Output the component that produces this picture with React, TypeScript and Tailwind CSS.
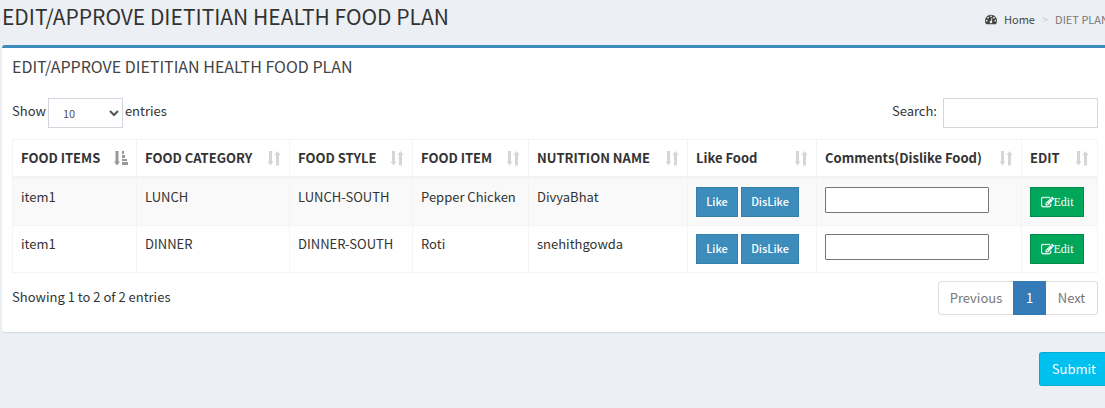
import React from "react";

type SortState = "both" | "asc";

type Column = { label: string; width: string; sort: SortState };

const columns: Column[] = [
  { label: "FOOD ITEMS", width: "w-[124px]", sort: "asc" },
  { label: "FOOD CATEGORY", width: "w-[153px]", sort: "both" },
  { label: "FOOD STYLE", width: "w-[123px]", sort: "both" },
  { label: "FOOD ITEM", width: "w-[116px]", sort: "both" },
  { label: "NUTRITION NAME", width: "w-[159px]", sort: "both" },
  { label: "Like Food", width: "w-[129px]", sort: "both" },
  { label: "Comments(Dislike Food)", width: "w-[205px]", sort: "both" },
  { label: "EDIT", width: "w-[76px]", sort: "both" },
];

const rows = [
  ["item1", "LUNCH", "LUNCH-SOUTH", "Pepper Chicken", "DivyaBhat"],
  ["item1", "DINNER", "DINNER-SOUTH", "Roti", "snehithgowda"],
];

function DashboardIcon() {
  return (
    <svg viewBox="0 0 1792 1792" fill="currentColor" className="size-3" aria-hidden="true">
      <path d="M384 1152q0-53-37.5-90.5t-90.5-37.5-90.5 37.5-37.5 90.5 37.5 90.5 90.5 37.5 90.5-37.5 37.5-90.5zm192-448q0-53-37.5-90.5t-90.5-37.5-90.5 37.5-37.5 90.5 37.5 90.5 90.5 37.5 90.5-37.5 37.5-90.5zm428 481l101-382q6-26-7.5-48.5t-38.5-29.5-48 6.5-30 39.5l-101 382q-60 5-107 43.5t-63 98.5q-20 77 20 146t117 89 146-20 89-117q16-60-6-117t-72-91zm660-33q0-53-37.5-90.5t-90.5-37.5-90.5 37.5-37.5 90.5 37.5 90.5 90.5 37.5 90.5-37.5 37.5-90.5zm-640-640q0-53-37.5-90.5t-90.5-37.5-90.5 37.5-37.5 90.5 37.5 90.5 90.5 37.5 90.5-37.5 37.5-90.5zm448 192q0-53-37.5-90.5t-90.5-37.5-90.5 37.5-37.5 90.5 37.5 90.5 90.5 37.5 90.5-37.5 37.5-90.5zm320 448q0 261-141 483-19 29-54 29h-1402q-35 0-54-29-141-221-141-483 0-182 71-348t191-286 286-191 348-71 348 71 286 191 191 286 71 348z" />
    </svg>
  );
}

function EditIcon() {
  return (
    <svg viewBox="0 0 1792 1792" fill="currentColor" stroke="currentColor" strokeWidth="40" className="size-[13px]" aria-hidden="true">
      <path d="M888 1184l116-116-152-152-116 116v56h96v96h56zm440-720q-16-16-33 1l-350 350q-17 17-1 33t33-1l350-350q17-17 1-33zm80 594v190q0 119-84.5 203.5t-203.5 84.5h-832q-119 0-203.5-84.5t-84.5-203.5v-832q0-119 84.5-203.5t203.5-84.5h832q63 0 117 25 15 7 18 23 3 17-9 29l-49 49q-14 14-32 8-23-6-45-6h-832q-66 0-113 47t-47 113v832q0 66 47 113t113 47h832q66 0 113-47t47-113v-126q0-13 9-22l64-64q15-15 35-7t20 29zm-96-738l288 288-672 672h-288v-288zm444 132l-92 92-288-288 92-92q28-28 68-28t68 28l152 152q28 28 28 68t-28 68z" />
    </svg>
  );
}

function SortIcon({ state }: { state: SortState }) {
  if (state === "asc") {
    return (
      <svg viewBox="0 0 14 15" fill="#999999" className="h-[15px] w-3.5 shrink-0" aria-hidden="true">
        <path d="M1.500 0h3v10.500h1.500L3 14.500L0 10.500h1.500z" />
        <path d="M8 0h2v3H8zM8 4h3v3H8zM8 8h5v2H8zM8 11h6v3H8z" />
      </svg>
    );
  }
  return (
    <svg viewBox="0 0 14 15" fill="#d6d6d6" className="h-[15px] w-3.5 shrink-0" aria-hidden="true">
      <path d="M2 0h3v10.500h1.500L3.500 14.500L0.500 10.500H2z" />
      <path d="M9 14.500h3V4h1.500L10.500 0L7.500 4H9z" />
    </svg>
  );
}

export default function App() {
  return (
    <div className="min-h-screen overflow-x-hidden bg-[#ecf0f5] pl-0.5 font-['Noto_Sans_CJK_SC',sans-serif] text-[13px] leading-5 text-[#333333]">
      <header className="flex h-[45px] items-start justify-between">
        <h1 className="pt-[3px] text-[21px] leading-[26px]">EDIT/APPROVE DIETITIAN HEALTH FOOD PLAN</h1>
        <nav aria-label="Breadcrumb" className="-mr-1 flex items-center pt-[9px] text-[11px] whitespace-nowrap">
          <a href="#" className="flex items-center gap-[7px] text-[#444444]">
            <DashboardIcon />
            Home
          </a>
          <span className="px-[7px] text-[#cccccc]">&gt;</span>
          <span className="text-[#777777]">DIET PLAN</span>
        </nav>
      </header>

      <main>
        <section className="rounded-l-[3px] border-t-3 border-[#3c8dbc] bg-white pr-[7px] pb-[17px] pl-2.5 shadow-[0_1px_1px_rgba(0,0,0,0.1)]">
          <h2 className="pt-2 text-[16px] leading-5 text-[#444444]">EDIT/APPROVE DIETITIAN HEALTH FOOD PLAN</h2>

          <div className="mt-[22px] flex justify-between">
            <label className="flex gap-0.5">
              <span className="pt-[3px]">Show</span>
              <select className="h-[30px] w-[75px] border border-[#d2d6de] bg-white pl-2.5 text-[11px] text-[#555555]">
                <option>10</option>
                <option>25</option>
                <option>50</option>
              </select>
              <span className="pt-[3px]">entries</span>
            </label>
            <label className="flex gap-1.5">
              <span className="pt-[3px]">Search:</span>
              <input type="search" className="h-[30px] w-[155px] border border-[#d2d6de] bg-white px-2.5 text-[11px]" />
            </label>
          </div>

          <table className="mt-[11px] w-full table-fixed border-separate border-spacing-0 border-t border-l border-[#f4f4f4]">
            <thead>
              <tr>
                {columns.map((column) => (
                  <th key={column.label} className={`${column.width} border-r border-b-3 border-[#f4f4f4] p-2 text-left font-bold whitespace-nowrap`}>
                    <div className="flex items-center justify-between">
                      {column.label}
                      <SortIcon state={column.sort} />
                    </div>
                  </th>
                ))}
              </tr>
            </thead>
            <tbody>
              {rows.map((row, index) => (
                <tr key={row[1]} className="odd:bg-[#f9f9f9]">
                  {row.map((value, cell) => (
                    <td key={cell} className="border-r border-b border-[#f4f4f4] p-2 align-top">{value}</td>
                  ))}
                  <td className="border-r border-b border-[#f4f4f4] p-2 align-top">
                    <div className="flex gap-[3px] text-[11px] font-medium text-white">
                      <button type="button" className="h-[30px] w-[42px] border border-[#367fa9] bg-[#3c8dbc] pb-0.5">Like</button>
                      <button type="button" className="h-[30px] w-[58px] border border-[#367fa9] bg-[#3c8dbc] pb-0.5">DisLike</button>
                    </div>
                  </td>
                  <td className="border-r border-b border-[#f4f4f4] p-2 align-top">
                    <input type="text" aria-label={`Comment ${index + 1}`} className="block h-[26px] w-[164px] rounded-[1px] border border-[#767676] bg-white px-0.5" />
                  </td>
                  <td className="border-r border-b border-[#f4f4f4] p-2 align-top">
                    <button type="button" className="flex h-[30px] w-[54px] items-center justify-center border border-[#008d4c] bg-[#00a65a] font-['Liberation_Serif',serif] text-xs text-white">
                      <EditIcon />
                      Edit
                    </button>
                  </td>
                </tr>
              ))}
            </tbody>
          </table>

          <div className="mt-2 flex justify-between">
            <p className="pt-1.5">Showing 1 to 2 of 2 entries</p>
            <nav aria-label="Pagination" className="flex h-[34px] text-[#777777]">
              <button type="button" className="w-[75px] rounded-l border border-r-0 border-[#dddddd] bg-white">Previous</button>
              <button type="button" aria-current="page" className="w-[33px] bg-[#337ab7] text-white">1</button>
              <button type="button" className="w-[52px] rounded-r border border-l-0 border-[#dddddd] bg-white">Next</button>
            </nav>
          </div>
        </section>

        <div className="mt-5 flex justify-end">
          <button type="submit" className="h-[34px] rounded-l-[3px] border border-r-0 border-[#00acd6] bg-[#00c0ef] pr-[9px] pl-3 text-white">Submit</button>
        </div>
      </main>
    </div>
  );
}
